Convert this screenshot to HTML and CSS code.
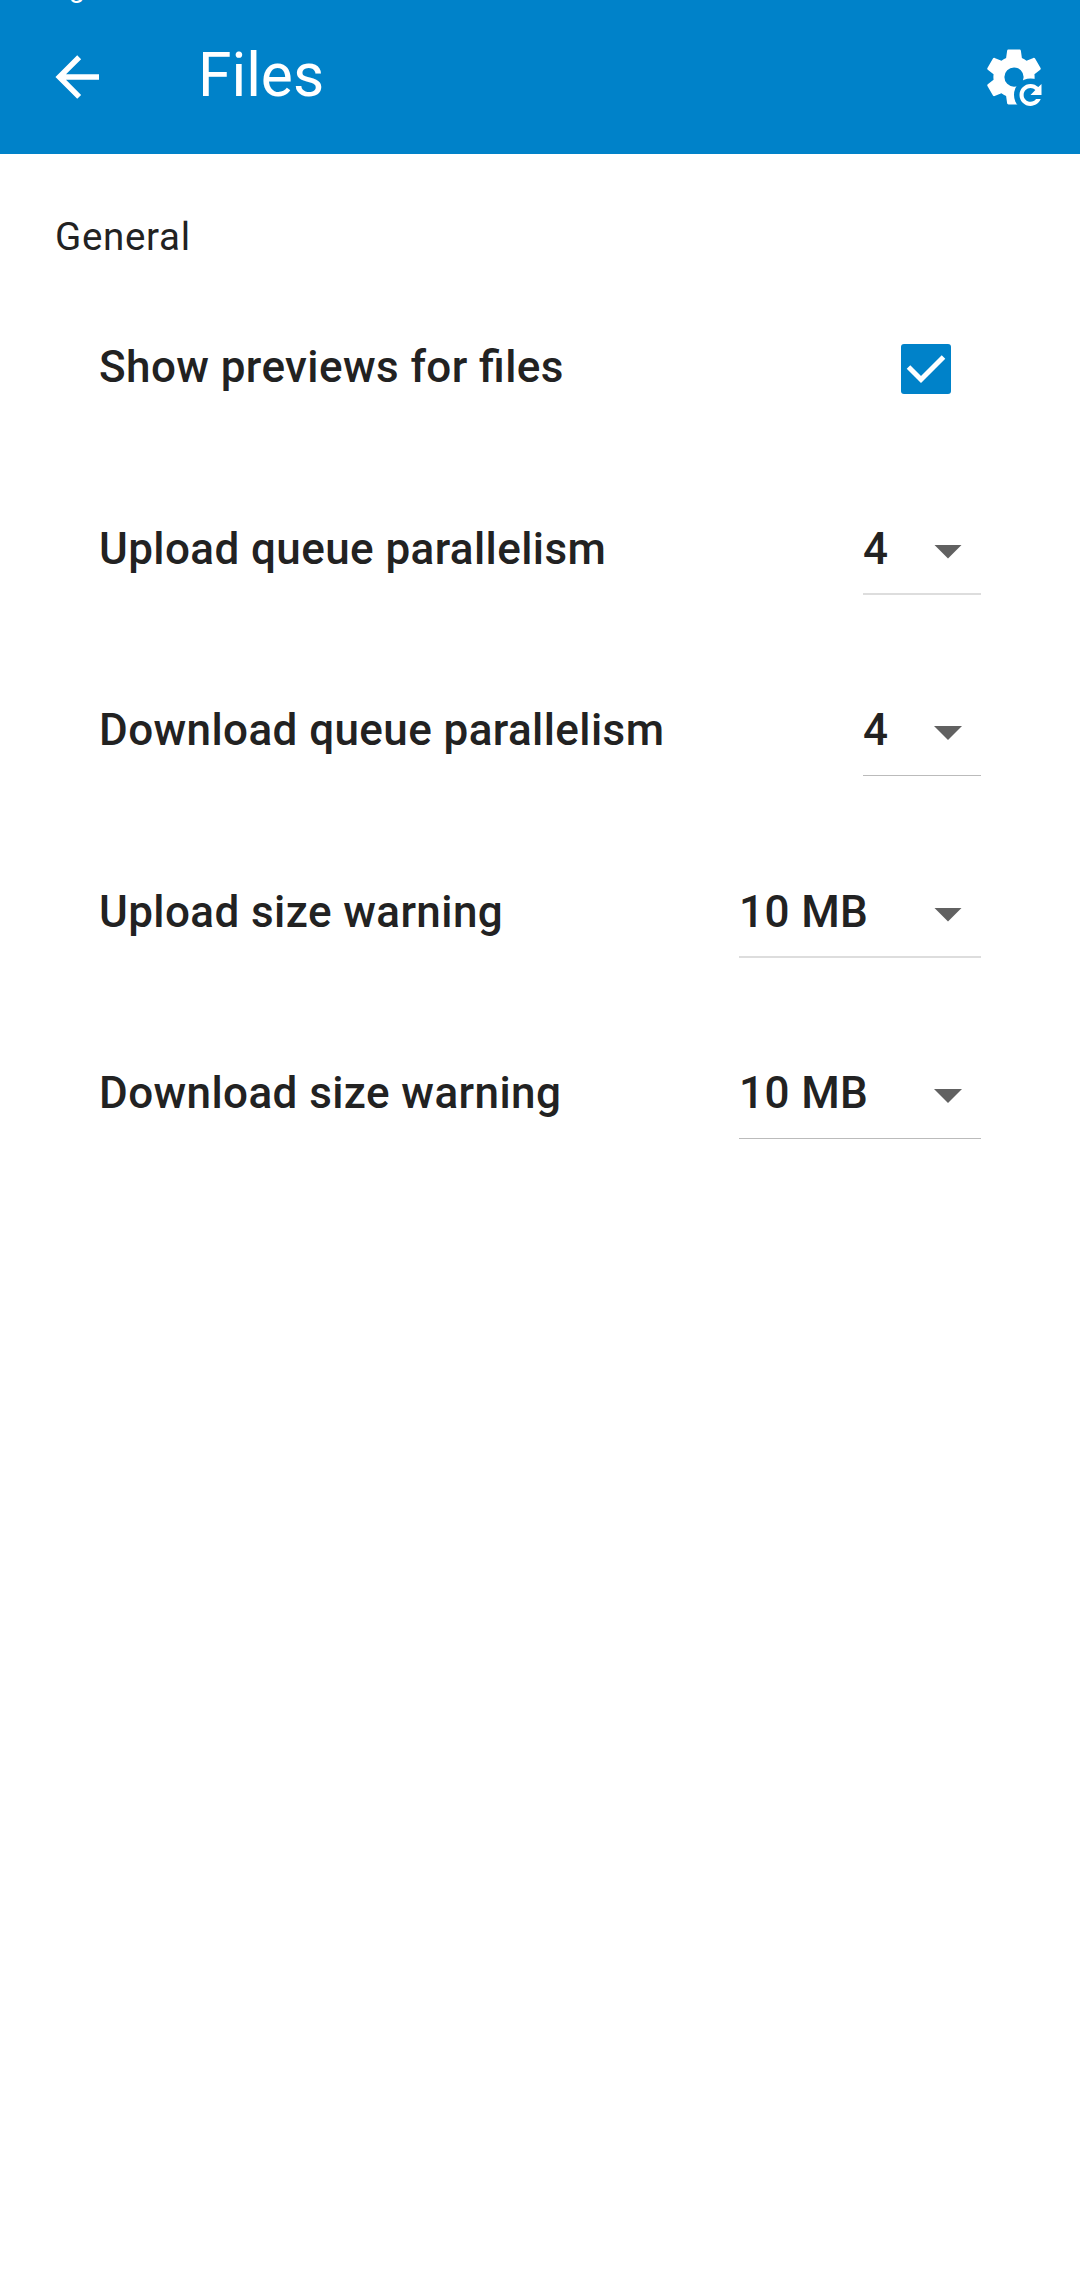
FILE: index.html
```html
<!DOCTYPE html>
<html lang="en">
<head>
<meta charset="utf-8">
<title>Files</title>
<link rel="stylesheet" href="styles.css">
</head>
<body>
<header class="toolbar">
  <span class="status">g</span>
  <svg class="icon" viewBox="0 0 24 24"><path d="M20 11v2H8l5.5 5.5-1.42 1.42L4.16 12l7.92-7.92L13.5 5.5 8 11z"/></svg>
  <h1 class="title">Files</h1>
  <svg class="icon" viewBox="0 0 24 24">
    <mask id="cut"><rect width="24" height="24" fill="#fff"/><circle cx="18" cy="18.5" r="6" fill="#000"/></mask>
    <path mask="url(#cut)" d="M12,15.5A3.5,3.5 0 0,1 8.5,12A3.5,3.5 0 0,1 12,8.5A3.5,3.5 0 0,1 15.5,12A3.5,3.5 0 0,1 12,15.5M19.43,12.97C19.47,12.65 19.5,12.33 19.5,12C19.5,11.67 19.47,11.34 19.43,11L21.54,9.37C21.73,9.22 21.78,8.95 21.66,8.73L19.66,5.27C19.54,5.05 19.27,4.96 19.05,5.05L16.56,6.05C16.04,5.66 15.5,5.32 14.87,5.07L14.5,2.42C14.46,2.18 14.25,2 14,2H10C9.75,2 9.54,2.18 9.5,2.42L9.13,5.07C8.5,5.32 7.96,5.66 7.44,6.05L4.95,5.05C4.73,4.96 4.46,5.05 4.34,5.27L2.34,8.73C2.21,8.95 2.27,9.22 2.46,9.37L4.57,11C4.53,11.34 4.5,11.67 4.5,12C4.5,12.33 4.53,12.65 4.57,12.97L2.46,14.63C2.27,14.78 2.21,15.05 2.34,15.27L4.34,18.73C4.46,18.95 4.73,19.03 4.95,18.95L7.44,17.94C7.96,18.34 8.5,18.68 9.13,18.93L9.5,21.58C9.54,21.82 9.75,22 10,22H14Z"/>
    <path d="M18 14.5C19.11 14.5 20.11 14.95 20.83 15.67L22 14.5V18.5H18L19.77 16.73C19.32 16.28 18.69 16 18 16C16.62 16 15.5 17.12 15.5 18.5C15.5 19.88 16.62 21 18 21C18.82 21 19.55 20.61 20 20H21.71C21.12 21.47 19.68 22.5 18 22.5C15.79 22.5 14 20.71 14 18.5C14 16.29 15.79 14.5 18 14.5Z"/>
  </svg>
</header>
<main class="settings">
  <h2 class="section">General</h2>
  <div class="row"><span class="label">Show previews for files</span><span class="checkbox"><svg viewBox="0 0 50 50"><path d="M7.5 23 20 35.5 42.5 13"/></svg></span></div>
  <div class="row"><span class="label">Upload queue parallelism</span><span class="select"><span class="value">4</span><i class="caret"></i></span></div>
  <div class="row"><span class="label">Download queue parallelism</span><span class="select thin"><span class="value">4</span><i class="caret"></i></span></div>
  <div class="row"><span class="label">Upload size warning</span><span class="select wide"><span class="value">10 MB</span><i class="caret"></i></span></div>
  <div class="row"><span class="label">Download size warning</span><span class="select wide thin"><span class="value">10 MB</span><i class="caret"></i></span></div>
</main>
</body>
</html>
```
FILE: styles.css
```css
* { box-sizing: border-box; }
body {
  margin: 0;
  min-height: 2280px;
  background: #fff;
  color: #222;
  font-family: Roboto, "Noto Sans", sans-serif;
}
.toolbar {
  position: relative;
  display: flex;
  align-items: flex-start;
  height: 154px;
  padding: 44px 33px 0 44px;
  overflow: hidden;
  background: #0082c9;
  color: #fff;
}
.status {
  position: absolute;
  left: 69px;
  top: -28px;
  font-size: 28px;
  line-height: 32px;
}
.icon { width: 66px; height: 66px; fill: currentColor; flex: none; }
.title {
  flex: 1;
  margin: -3px 0 0 88px;
  font-size: 60.5px;
  font-weight: 400;
  line-height: 70px;
}
.section {
  margin: 0;
  padding: 58px 0 0 55px;
  height: 123px;
  font-size: 38.5px;
  font-weight: 400;
  line-height: 50px;
  letter-spacing: 0.7px;
}
.row {
  display: flex;
  justify-content: space-between;
  align-items: flex-start;
  height: 181.5px;
  padding: 64px 99px 0;
}
.label, .value {
  font-size: 44px;
  font-weight: 500;
  line-height: 52px;
  letter-spacing: 0.41px;
  font-feature-settings: "liga" 1, "dlig" 1;
  white-space: nowrap;
}
.checkbox {
  width: 50px;
  height: 50px;
  margin: 2.5px 30px 0 0;
  border-radius: 3px;
  background: #0082c9;
}
.checkbox svg { display: block; fill: none; stroke: #fff; stroke-width: 5; }
.select {
  display: flex;
  justify-content: space-between;
  width: 118px;
  height: 72.5px;
  border-bottom: 2px solid #ddd;
}
.wide { width: 242px; }
.thin { height: 72px; border-bottom: 1px solid #bbb; }
.caret {
  width: 28px;
  height: 14px;
  margin: 22px 19px 0 0;
  background: #616161;
  clip-path: polygon(0 0, 100% 0, 50% 100%);
}
```
